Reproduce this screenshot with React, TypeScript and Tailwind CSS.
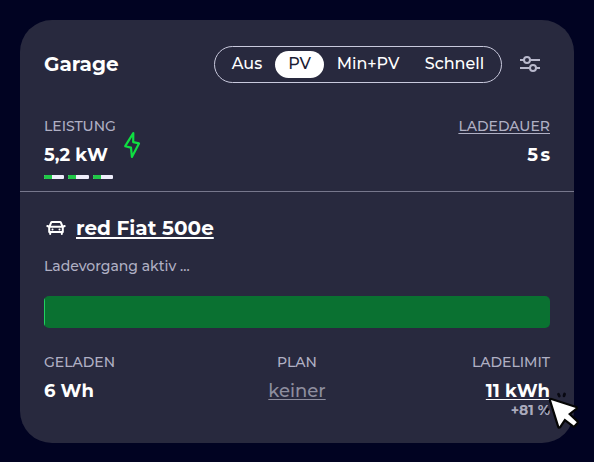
import React from "react";

const modes = [
  { name: "Aus", style: "w-14" },
  { name: "PV", style: "w-[49px] rounded-full bg-white text-[#1b1c33]" },
  { name: "Min+PV", style: "w-[88px]" },
  { name: "Schnell", style: "w-[85px]" },
];

function Slider() {
  return (
    <svg width="22" height="18" viewBox="0 0 22 18" fill="none" stroke="#b8b8cc" strokeWidth="2">
      <path d="M1 5h4M11.2 5H21M1 13h9.8M17 13h4" />
      <circle cx="8" cy="5" r="3" />
      <circle cx="14" cy="13" r="3" />
    </svg>
  );
}

function Bolt() {
  return (
    <svg width="18" height="28" viewBox="0 0 18 28" fill="none" stroke="#0fde41" strokeWidth="2.2" strokeLinejoin="round">
      <path d="M10.3 2.2 2.2 15.2 8 16.6 8.9 26 16 12.4 10.2 11.1Z" />
    </svg>
  );
}

function Car() {
  return (
    <svg width="20" height="16" viewBox="0 0 20 16" fill="none" stroke="#fff" strokeWidth="2" strokeLinejoin="round" strokeLinecap="round">
      <path d="M3.2 12V7.4L5 2.9Q5.3 2.1 6.1 2.1h7.8q.8 0 1.1.8L16.8 7.4V12ZM3.4 6.8h13.2M1.3 6l1.9.7M18.7 6l-1.9.7M4.2 12v2M15.8 12v2" />
      <path d="M6.4 9.5h.2M13.4 9.5h.2" strokeWidth="1.8" />
    </svg>
  );
}

function Pointer() {
  return (
    <svg className="absolute left-[542px] top-[388px]" width="44" height="46" viewBox="0 0 44 46">
      <path d="M16.5 6.2 17.3 8M22.6 6 22 7.9M5.6 21.6 4.4 23.4" stroke="#080812" strokeWidth="2.8" strokeLinecap="round" />
      <path
        d="M9 12 17.3 38.5 22.6 30.6 31.8 37.4 34.8 34.2 26 26 33.8 20Z"
        fill="#fff"
        stroke="#050505"
        strokeWidth="4.4"
        strokeLinejoin="round"
        paintOrder="stroke"
      />
    </svg>
  );
}

export default function App() {
  return (
    <main className="relative h-[462px] w-[594px] overflow-hidden bg-[#010322] p-5 font-[Montserrat,Inter,sans-serif] text-white">
      <section className="flex h-[423px] flex-col rounded-[32px] bg-[#28293e] pt-6">
        <header className="flex h-[41px] items-center px-6">
          <h1 className="pb-0.5 text-[20px] font-bold leading-6">Garage</h1>
          <div className="ml-auto flex h-[37px] w-[288px] items-center rounded-full border border-[#c9c9dd] pl-1 text-base font-medium">
            {modes.map((m) => (
              <span key={m.name} className={"flex h-[27px] items-center justify-center pb-0.5 " + m.style}>{m.name}</span>
            ))}
          </div>
          <div className="ml-[17px] mr-[9px] pb-0.5"><Slider /></div>
        </header>

        <div className="mt-8 flex h-[75px] justify-between border-b border-[#77778c] px-6">
          <div className="flex">
            <div className="w-[72px]">
              <div className="h-[18px] whitespace-nowrap text-[14px] font-medium leading-[18px] text-[#b0b0c4]">LEISTUNG</div>
              <div className="mt-[9px] whitespace-nowrap text-[18px] font-bold leading-[22px]">5,2 kW</div>
              <div className="mt-[9px] grid w-[69px] grid-cols-3 gap-1">
                {[1, 2, 3].map((phase) => (
                  <div key={phase} className="h-1 overflow-hidden rounded-[1px] bg-[#eeeefb]"><div className="h-full w-2 bg-[#20c947]" /></div>
                ))}
              </div>
            </div>
            <div className="ml-[7px] mt-[14px]"><Bolt /></div>
          </div>
          <div className="text-right">
            <div className="text-[14px] font-medium leading-[18px] text-[#b0b0c4] underline underline-offset-2">LADEDAUER</div>
            <div className="mt-[9px] text-[18px] font-bold leading-[22px]">5<span className="ml-[2.5px]">s</span></div>
          </div>
        </div>

        <div className="px-6 pt-[21px]">
          <div className="flex h-[30px] items-center">
            <span className="ml-0.5"><Car /></span>
            <h2 className="ml-[10px] whitespace-nowrap text-[20px] font-bold leading-[30px] underline decoration-2 underline-offset-2">red Fiat 500e</h2>
          </div>
          <p className="mt-[13px] text-[14px] font-medium leading-5 text-[#b0b0c4]">Ladevorgang aktiv …</p>
          <div className="mt-5 h-8 overflow-hidden rounded-[5px] bg-[#0a7131]"><div className="h-full w-px bg-[#20d260]" /></div>
          <div className="mt-6 grid grid-cols-3">
            <div>
              <div className="text-[14px] font-medium leading-5 text-[#b0b0c4]">GELADEN</div>
              <div className="mt-2 text-[18px] font-bold leading-[22px]">6 Wh</div>
            </div>
            <div className="text-center">
              <div className="text-[14px] font-medium leading-5 text-[#b0b0c4]">PLAN</div>
              <div className="mt-2 text-[18px] font-medium leading-[22px] text-[#8e8e9f] underline decoration-1 underline-offset-2">keiner</div>
            </div>
            <div className="text-right">
              <div className="text-[14px] font-medium leading-5 text-[#b0b0c4]">LADELIMIT</div>
              <div className="mt-2 text-[18px] font-bold leading-[22px] underline decoration-1 underline-offset-2">11 kWh</div>
              <div className="mt-px text-[14px] font-bold leading-[14px] text-[#aaaabc]">+81 %</div>
            </div>
          </div>
        </div>
      </section>
      <Pointer />
    </main>
  );
}
